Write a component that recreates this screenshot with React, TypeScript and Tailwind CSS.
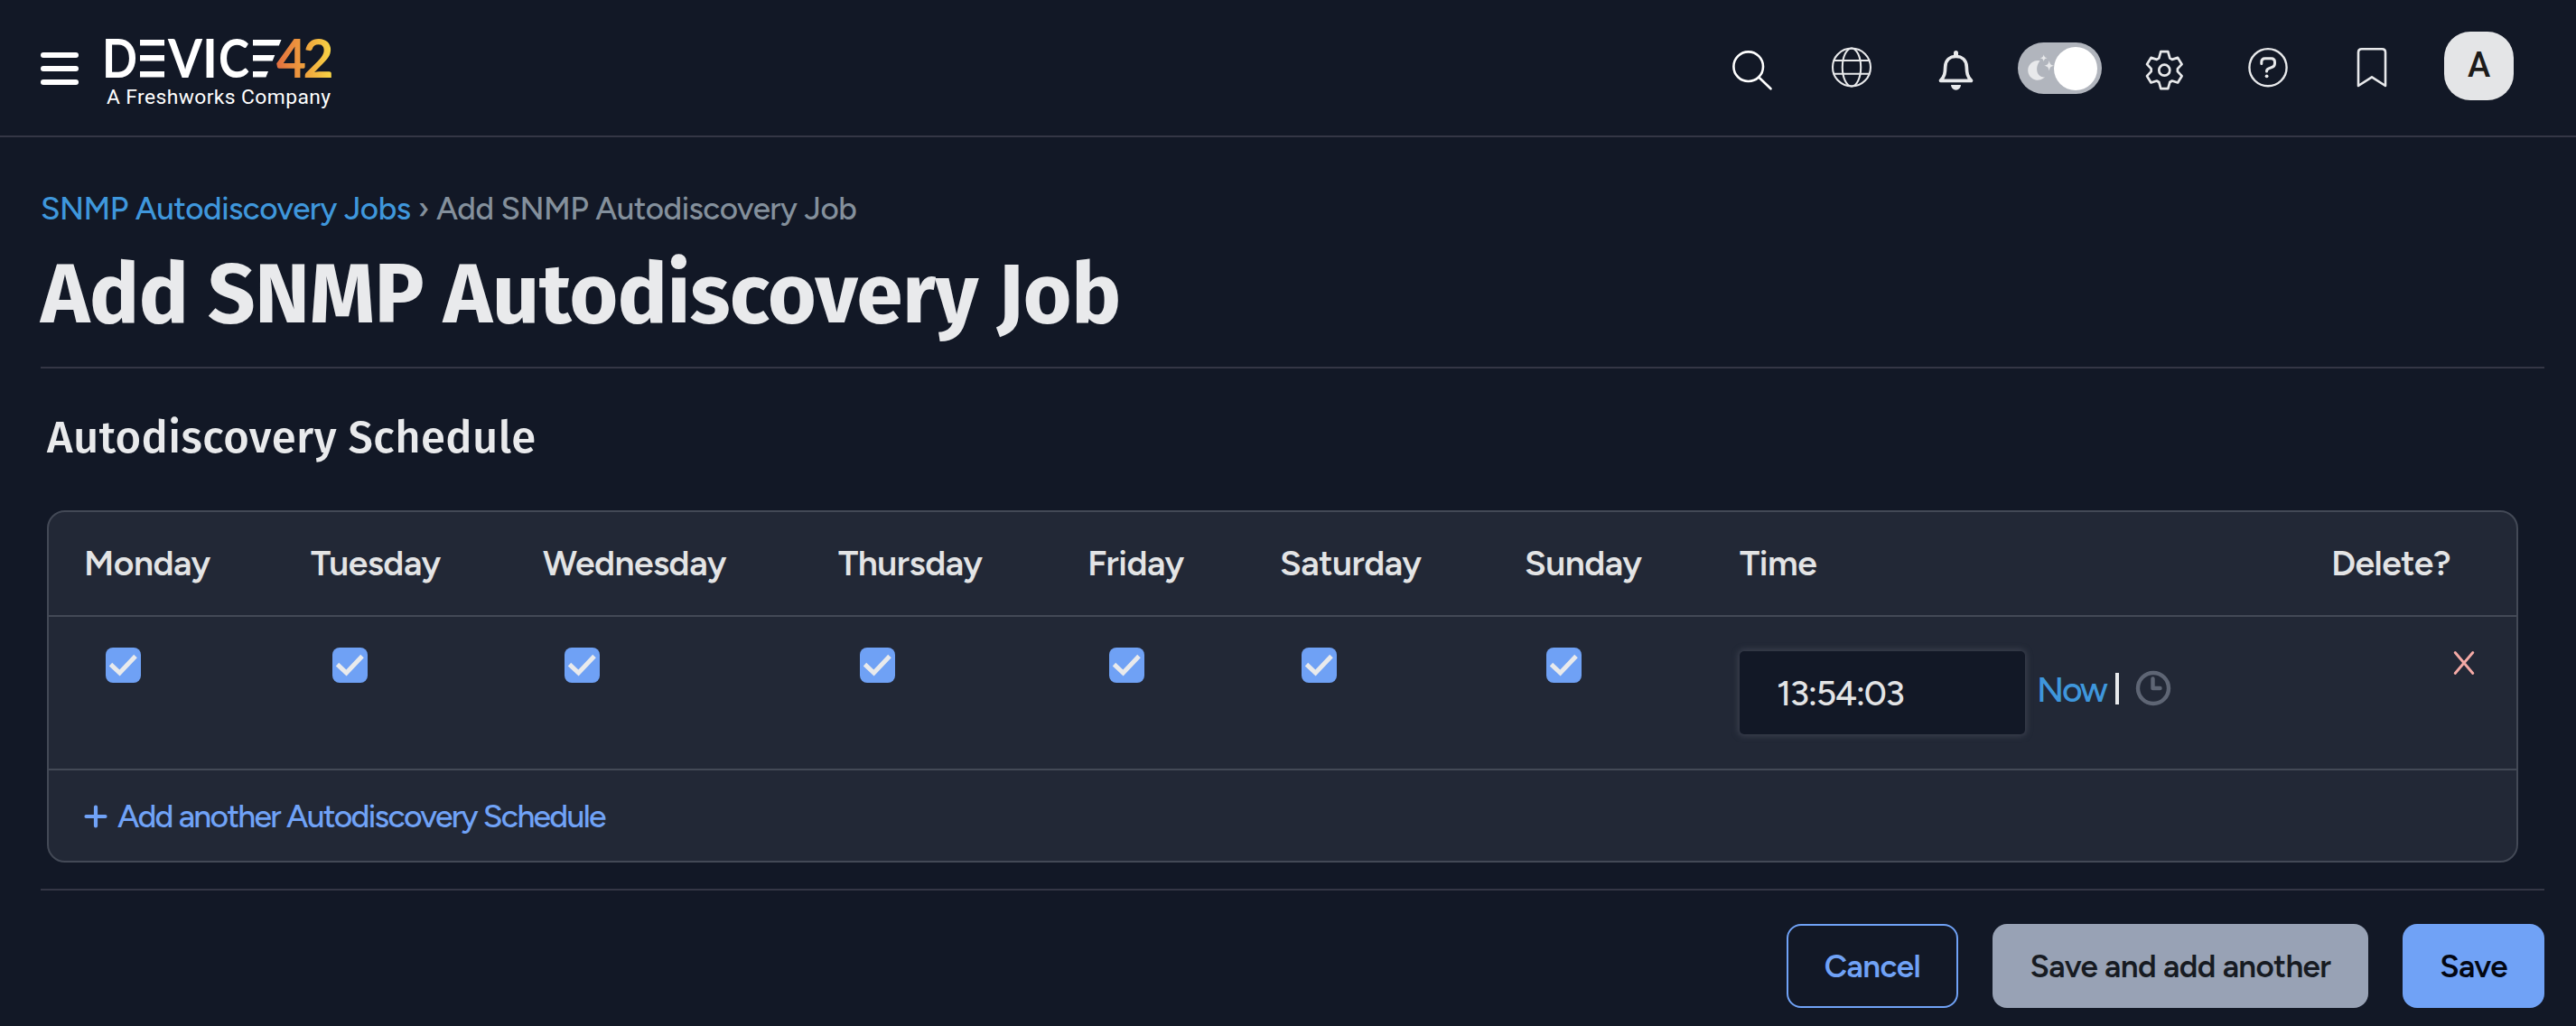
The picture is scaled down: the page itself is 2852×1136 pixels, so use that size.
const DAYS = ["Monday", "Tuesday", "Wednesday", "Thursday", "Friday", "Saturday", "Sunday"];
const COLS = "grid grid-cols-[251px_257px_327px_276px_213px_271px_238px_655px_1fr]";

const line = { fill: "none", strokeLinecap: "round", strokeLinejoin: "round" } as const;

function Logo() {
  const bold = { fontFamily: "Lato, sans-serif", fontWeight: 700, fontSize: 58.5 };
  return (
    <svg width="252" height="80" viewBox="0 0 252 80" className="ml-[30px] mt-10 overflow-visible">
      <defs>
        <linearGradient id="brand" gradientUnits="userSpaceOnUse" x1="190" y1="0" x2="250" y2="0">
          <stop offset="0" stopColor="#e4703f" />
          <stop offset="0.5" stopColor="#efa03d" />
          <stop offset="1" stopColor="#f8d545" />
        </linearGradient>
      </defs>
      <g fill="#fff" style={bold}>
        <text x="-4" y="46" textLength="39" lengthAdjust="spacingAndGlyphs">D</text>
        <text x="69" y="46" textLength="38" lengthAdjust="spacingAndGlyphs">V</text>
        <text x="107" y="46" textLength="17" lengthAdjust="spacingAndGlyphs">I</text>
        <text x="125" y="46" textLength="34" lengthAdjust="spacingAndGlyphs">C</text>
        <path d="M38 4h27v6.500H38zM38 21h27v6.500H38zM38 39h27v6.500H38z" />
        <path d="M163 4h31.500l-2.700 6.500H163zM163 21h24.300l-2.600 6.500H163zM163 39h17l-2.600 6.500H163z" />
      </g>
      <g fill="url(#brand)" style={bold}>
        <text x="189" y="46" textLength="33" lengthAdjust="spacingAndGlyphs">4</text>
        <text x="218.500" y="46" textLength="34" lengthAdjust="spacingAndGlyphs">2</text>
      </g>
      <text x="1" y="74.500" fill="#fff" textLength="248" style={{ fontFamily: "Roboto, sans-serif", fontWeight: 450, fontSize: 22.8 }}>
        A Freshworks Company
      </text>
    </svg>
  );
}

function Header() {
  return (
    <header className="flex h-[152px] items-start border-b-2 border-[#343645] pl-[45px] pr-[69px]">
      <button className="mt-[58px] flex w-[42px] flex-col gap-[9px]" aria-label="Menu">
        <span className="h-1.5 w-full rounded-full bg-white" />
        <span className="h-1.5 w-full rounded-full bg-white" />
        <span className="h-1.5 w-full rounded-full bg-white" />
      </button>
      <Logo />
      <div className="ml-auto flex items-start">
        <svg width="60" height="60" viewBox="0 0 60 60" className="mr-[49px] mt-[45px]" {...line} stroke="#fff" strokeWidth="2.600">
          <circle cx="24.700" cy="28.700" r="16.300" />
          <path d="M36.500 40.700 49.500 53.300" />
        </svg>
        <svg width="60" height="60" viewBox="0 0 60 60" className="mr-[55px] mt-[45px]" {...line} stroke="#e8e9eb" strokeWidth="2.100">
          <circle cx="30" cy="29.500" r="21" />
          <ellipse cx="30" cy="29.500" rx="10.200" ry="21" />
          <path d="M10.500 22h39M10.500 36.700h39" />
        </svg>
        <svg width="60" height="60" viewBox="0 0 60 60" className="mr-[39px] mt-[45px]" {...line} stroke="#e8e9eb" strokeWidth="3.700">
          <path d="M13.500 44.300C18 39.500 18.500 36 18.700 29 19 21.500 24 17.500 30.500 17.500S42 21.500 42.300 29C42.500 36 43 39.500 47.500 44.300Z" />
          <path d="M30.500 13.500v3" strokeWidth="5" />
          <path d="M25 49h11a5.500 5.700 0 0 1-11 0Z" fill="#e8e9eb" stroke="none" />
        </svg>
        <div className="mr-[39px] mt-[47px] flex h-[57px] w-[93px] items-center justify-between rounded-full bg-[#b1b5bd] pl-[11px] pr-[5px]">
          <svg width="29" height="57" viewBox="11 0 29 57" className="overflow-visible" fill="#e8e9eb">
            <path d="M24.500 20.200A10.900 10.900 0 1 0 30 38.300C22.500 39.500 17.500 29.500 24.500 20.200Z" />
            <path d="M28.700 13.300c.6 2.800 1.200 3.400 4 4-2.800.6-3.400 1.200-4 4-.6-2.800-1.200-3.400-4-4 2.800-.6 3.400-1.200 4-4Z" />
            <path d="M34.700 20c.9 4.200 1.600 4.900 5.600 5.700-4 .8-4.700 1.500-5.600 5.700-.9-4.200-1.600-4.900-5.600-5.700 4-.8 4.700-1.500 5.600-5.700Z" />
          </svg>
          <span className="size-12 rounded-full bg-white" />
        </div>
        <svg width="60" height="60" viewBox="0 0 60 60" className="mr-[55px] mt-[45px]" {...line} stroke="#e8e9eb" strokeWidth="2.700">
          <circle cx="30.300" cy="32.700" r="6" />
          <path transform="translate(30.3 32.700)" d="M4-20.500 6-13.300 8.500-11.800 14.800-13.800 19.300-6.500 14.600-1.500V1.500L19.300 6.500 14.800 13.800 8.500 11.800 6 13.300 4 20.500H-4L-6 13.300-8.500 11.800-14.800 13.800-19.300 6.500-14.600 1.500V-1.500L-19.300-6.500-14.800-13.800-8.500-11.800-6-13.300-4-20.500Z" />
        </svg>
        <svg width="60" height="60" viewBox="0 0 60 60" className="mr-[55px] mt-[45px]" {...line} stroke="#e8e9eb" strokeWidth="2.400">
          <circle cx="30" cy="29.700" r="20.600" />
          <path d="M22.800 25.500v-1.700q0-4 4-4h6.700q4 0 4 4v1.400q0 3-3 4.200l-3.700 1.500q-2.300 1-2.300 3.200" strokeWidth="3" />
          <circle cx="28.600" cy="39.300" r="1.900" fill="#e8e9eb" stroke="none" />
        </svg>
        <svg width="60" height="60" viewBox="0 0 60 60" className="mr-[50px] mt-[45px]" {...line} stroke="#e8e9eb" strokeWidth="2.600">
          <path d="M15 50V13q0-3.800 3.800-3.800h22.400q3.800 0 3.800 3.800V50L30 40.300Z" />
        </svg>
        <div className="mt-[35px] flex h-[76px] w-[77px] items-center justify-center rounded-[29px] bg-[#e4e5e7] pb-0.5 font-['Roboto',sans-serif] text-[38px] font-medium text-[#1c1b1a]">
          A
        </div>
      </div>
    </header>
  );
}

function Checkbox() {
  return (
    <span className="flex size-[39px] items-center justify-center rounded-lg bg-[#6fa1f5]">
      <svg width="39" height="39" viewBox="0 0 39 39" fill="none" stroke="#e9eaec" strokeWidth="5">
        <path d="M5.500 18.700 15.500 28 33 9.500" />
      </svg>
    </span>
  );
}

function ScheduleTable() {
  return (
    <section className="ml-[7px] mr-[29px] mt-[50px] rounded-[20px] border-2 border-[#434956] bg-[#222836]">
      <div className={`${COLS} h-[114px] items-center pl-[39px] pr-[77px] text-[39px] font-semibold tracking-[-0.5px] text-[#e3e4e5]`}>
        {DAYS.map((d) => (
          <span key={d}>{d}</span>
        ))}
        <span>Time</span>
        <span className="text-right">Delete?</span>
      </div>
      <div className={`${COLS} h-[170px] items-start border-t-2 border-[#434956] pl-[39px] pr-[46px] pt-[34px]`}>
        {DAYS.map((d) => (
          <span key={d} className="pl-6">
            <Checkbox />
          </span>
        ))}
        <div className="mt-1 flex items-start text-[39px] tracking-[-1.4px]">
          <div className="flex h-[92px] w-[316px] items-center rounded-[5px] bg-[#121826] pl-[41px] pt-0.5 text-[#e3e4e5] shadow-[0_0_6px_2px_#3b404e]">
            13:54:03
          </div>
          <a className="ml-[13px] mt-5 w-[77px] leading-[46px] tracking-[-2.2px] text-[#3f97dc]">Now</a>
          <span className="ml-[10px] mt-6 h-[35px] w-1 bg-[#e9eaec]" />
          <svg width="40" height="40" viewBox="0 0 40 40" className="ml-[18px] mt-[21px]" {...line} stroke="#5e6574" strokeWidth="4.400">
            <circle cx="20" cy="20" r="17" />
            <path d="M19.500 9.500v10.500h8" />
          </svg>
        </div>
        <svg width="24" height="28" viewBox="0 0 24 28" className="mt-[3px] justify-self-end" {...line} stroke="#f4a9a5" strokeWidth="2.900">
          <path d="M2.200 2.500 21.800 25.500M21.800 2.500 2.200 25.500" />
        </svg>
      </div>
      <div className="flex h-[102px] items-center border-t-2 border-[#434956] pl-[39px] pt-0.5 text-[35.5px] tracking-[-1.7px] text-[#70a2f6]">
        <svg width="26" height="26" viewBox="0 0 26 26" {...line} stroke="#70a2f6" strokeWidth="4.200">
          <path d="M13 2.500v21M2.500 13h21" />
        </svg>
        <span className="ml-[11px]">Add another Autodiscovery Schedule</span>
      </div>
    </section>
  );
}

export default function App() {
  return (
    <div className="min-h-[1136px] w-full overflow-hidden bg-[#121826] font-['Figtree','Lato',sans-serif] font-medium">
      <Header />
      <main className="pl-[45px] pr-[35px]">
        <nav className="mt-[59px] flex h-10 items-center gap-2 whitespace-nowrap text-[35px] leading-10 tracking-[-0.5px] text-[#84909c]">
          <a className="text-[#3f97dc]">SNMP Autodiscovery Jobs</a>
          <span>›</span>
          <span>Add SNMP Autodiscovery Job</span>
        </nav>
        <h1 className="mt-[25px] font-['Fira_Sans',sans-serif] text-[92px] font-bold leading-[100px] tracking-[-0.4px] text-[#e9eaec]">
          Add SNMP Autodiscovery Job
        </h1>
        <hr className="mt-[30px] border-t-2 border-[#343645]" />
        <h2 className="ml-[7px] mt-[47px] font-['Fira_Sans',sans-serif] text-[49px] font-medium leading-[60px] tracking-[0.4px] text-[#e9eaec]">
          Autodiscovery Schedule
        </h2>
        <ScheduleTable />
        <hr className="mt-[29px] border-t-2 border-[#343645]" />
        <div className="mt-[37px] flex justify-end gap-[38px] text-[35px] font-semibold tracking-[-0.6px]">
          <button className="h-[93px] w-[190px] rounded-2xl border-2 border-[#70a2f6] pt-0.5 text-[#70a2f6]">Cancel</button>
          <button className="h-[93px] w-[416px] rounded-2xl bg-[#98a2b5] pt-0.5 text-[#171b22]">Save and add another</button>
          <button className="h-[93px] w-[157px] rounded-2xl bg-[#70a2f6] pt-0.5 text-[#030712]">Save</button>
        </div>
      </main>
    </div>
  );
}
